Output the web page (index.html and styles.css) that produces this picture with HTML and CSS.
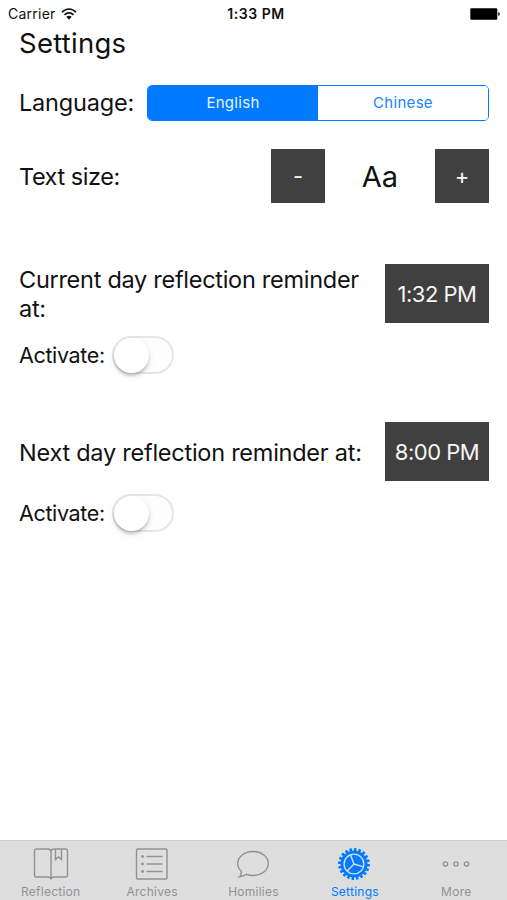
FILE: index.html
```html
<!DOCTYPE html>
<html lang="en">
<head>
<meta charset="utf-8">
<title>Settings</title>
<link rel="stylesheet" href="styles.css">
</head>
<body>
<div class="screen">
  <header class="status">
    <div class="carrier"><span>Carrier</span>
      <svg width="16" height="12" viewBox="0 0 16 12" fill="none" stroke="#111" stroke-width="1.7"><path d="M1 4.3C5-.1 11-.1 15 4.3M3.5 6.9c2.6-2.7 6.400-2.700 9 0"/><path d="M5.300 8.800c1.600-1.500 3.800-1.500 5.400 0L8 11.700z" fill="#111" stroke="none"/></svg>
    </div>
    <div class="clock">1:33 PM</div>
    <svg class="battery" width="30" height="12" viewBox="0 0 30 12"><rect x=".3" y=".3" width="27" height="11.400" rx="1.200"/><path d="M28.300 4q1.500.4 1.500 2t-1.500 2z"/></svg>
  </header>
  <main>
    <h1>Settings</h1>
    <section class="row language">
      <span class="label lang-label">Language:</span>
      <div class="segmented"><button class="selected">English</button><button>Chinese</button></div>
    </section>
    <section class="row sizing">
      <span class="label size-label">Text size:</span>
      <div class="stepper"><button class="dark">-</button><span class="sample">Aa</span><button class="dark">+</button></div>
    </section>
    <section class="row reminder first">
      <span class="label current-label">Current day reflection reminder<br>at:</span>
      <button class="dark time">1:32 PM</button>
    </section>
    <div class="activate"><span>Activate:</span><span class="switch"><i></i></span></div>
    <section class="row reminder second">
      <span class="label next-label">Next day reflection reminder at:</span>
      <button class="dark time">8:00 PM</button>
    </section>
    <div class="activate later"><span>Activate:</span><span class="switch"><i></i></span></div>
  </main>
  <nav class="tabs">
    <a class="tab"><svg width="36" height="34" viewBox="0 0 36 34"><path d="M18 31V4.500Q17.500 2 15 2H3.500Q1.500 2 1.500 4v24q0 2 2 2H15q3 0 3 2.500Q18 30 21 30h11.500q2 0 2-2V4q0-2-2-2H21q-3 0-3 2.500M22.500 2v10.500l3-2.500 3 2.500V2"/></svg><span>Reflection</span></a>
    <a class="tab"><svg width="36" height="34" viewBox="0 0 36 34"><rect x="2.500" y="2" width="30.500" height="30" rx="1"/><path d="M12.500 9.500h16M12.500 17h16M12.500 24.500h16"/><g class="solid"><circle cx="8.500" cy="9.500" r="1.400"/><circle cx="8.500" cy="17" r="1.400"/><circle cx="8.500" cy="24.500" r="1.400"/></g></svg><span>Archives</span></a>
    <a class="tab"><svg width="36" height="34" viewBox="0 0 36 34"><path d="M6.300 24.300C3.800 22 2.700 19.500 2.700 16.500 2.700 9.700 9.500 4.500 18 4.500S33.300 9.700 33.300 16.500 26.500 28.500 18 28.500c-2.500 0-4.700-.4-6.600-1.200-2 1.600-4.200 2.300-6.900 2.500 1.500-1.500 2-3.500 1.800-5.500z"/></svg><span>Homilies</span></a>
    <a class="tab active"><svg width="36" height="34" viewBox="0 0 36 34"><circle class="teeth" cx="17" cy="17" r="14.300" pathLength="180"/><circle class="gear" cx="17" cy="17" r="13.500"/><g class="spokes"><circle cx="17" cy="17" r="9.900"/><path d="M17 17 13.500 8M17 17l9.500 2.800M17 17l-6.800 7"/></g></svg><span>Settings</span></a>
    <a class="tab"><svg width="36" height="34" viewBox="0 0 36 34"><circle cx="7.500" cy="17" r="2.100"/><circle cx="18" cy="17" r="2.100"/><circle cx="28.500" cy="17" r="2.100"/></svg><span>More</span></a>
  </nav>
</div>
</body>
</html>
```
FILE: styles.css
```css
* { box-sizing: border-box; }
body { margin: 0; background: #fff; color: #111; font-family: Inter, "Liberation Sans", sans-serif; }
button { font: inherit; letter-spacing: inherit; margin: 0; padding: 0; border: 0; border-radius: 0; }
.screen { height: 900px; display: flex; flex-direction: column; overflow: hidden; }
.status { height: 27px; padding: 0 7px 0 8px; display: grid; grid-template-columns: 1fr auto 1fr; align-items: center; font-size: 14px; letter-spacing: .25px; }
.carrier { display: flex; align-items: center; gap: 5px; }
.clock { font-weight: 600; letter-spacing: .55px; padding-left: 4px; }
.battery { justify-self: end; }
main { flex: 1; padding: 0 18px 0 19px; }
h1 { margin: 0; height: 34px; line-height: 33px; font-size: 27.5px; font-weight: 400; letter-spacing: .25px; white-space: nowrap; }
.row { display: flex; align-items: center; justify-content: space-between; }
.label { font-size: 23.5px; line-height: 29px; letter-spacing: -.28px; white-space: nowrap; }
.lang-label { letter-spacing: -.2px; margin-bottom: 2px; }
.size-label { letter-spacing: -.45px; }
.next-label { margin-top: 2px; letter-spacing: -.25px; }
.language { height: 36px; margin-top: 24px; }
.segmented { width: 342px; height: 36px; display: flex; border: 1.5px solid #007aff; border-radius: 5px; overflow: hidden; font-size: 15px; letter-spacing: .3px; }
.segmented button { flex: 1; padding-bottom: 2px; color: #1683ff; background: #fff; }
.segmented .selected { color: #e8f3ff; background: #007aff; }
.sizing { height: 54px; margin-top: 28px; }
.stepper { width: 218px; display: flex; justify-content: space-between; align-items: center; }
.dark { width: 54px; height: 54px; background: #404040; color: #f5f5f5; font-size: 22px; }
.sample { font-size: 29px; }
.reminder { height: 59px; }
.first { margin-top: 61px; }
.second { margin-top: 48px; }
.dark.time { width: 104px; height: 59px; letter-spacing: -.5px; }
.activate { height: 38px; margin-top: 13px; display: flex; align-items: center; gap: 7px; font-size: 21.5px; letter-spacing: -.35px; }
.activate span:first-child { margin-bottom: 1px; }
.later { margin-top: 13px; }
.switch { width: 62px; height: 38px; border: 2px solid #e6e6e6; border-radius: 19px; background: #fdfdfd; }
.switch i { display: block; width: 35px; height: 35px; border-radius: 50%; background: #fff; box-shadow: 0 3px 3px rgba(0,0,0,.18), 0 3px 9px rgba(0,0,0,.08); }
.tabs { height: 60px; display: grid; grid-template-columns: repeat(5, 1fr); background: #dedede; border-top: 1px solid #cfcfcf; }
.tab { display: flex; flex-direction: column; align-items: center; padding-top: 6px; color: #929292; font-size: 12px; line-height: 14px; letter-spacing: .25px; }
.tab svg { fill: none; stroke: currentColor; stroke-width: 1.4; }
.tab span { margin-top: 4px; }
.tab .solid { fill: currentColor; stroke: none; }
.tab.active { color: #007aff; }
.tab .teeth { stroke-width: 3.200; stroke-dasharray: 5 4; }
.tab .gear { fill: currentColor; stroke: none; }
.tab .spokes { stroke: #dedede; stroke-width: 1.400; }
```
